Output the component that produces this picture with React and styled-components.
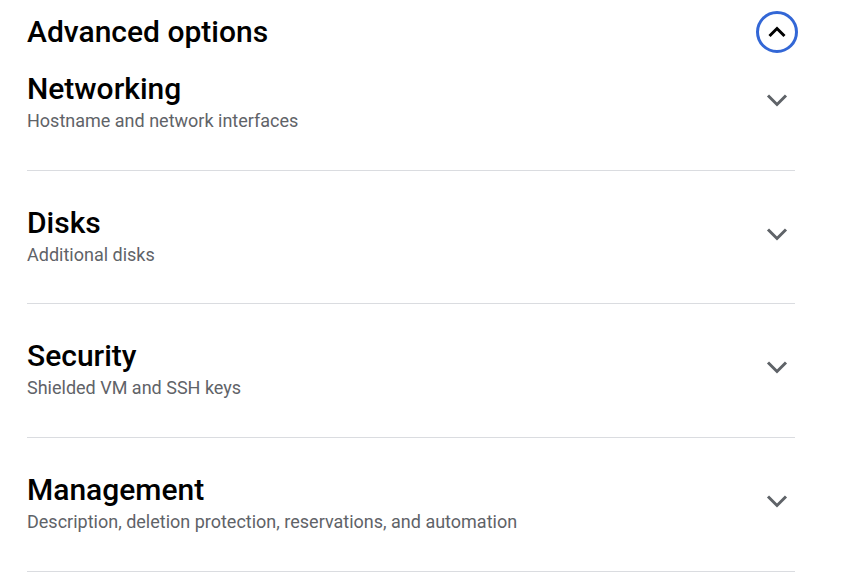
import styled, { createGlobalStyle } from "styled-components";

const sections = [
  { title: "Networking", subtitle: "Hostname and network interfaces" },
  { title: "Disks", subtitle: "Additional disks" },
  { title: "Security", subtitle: "Shielded VM and SSH keys" },
  { title: "Management", subtitle: "Description, deletion protection, reservations, and automation" },
];

function Chevron({ up, color }) {
  return (
    <svg width="24" height="24" viewBox="0 0 24 24">
      <polyline
        points={up ? "4.5,16 12,8.5 19.5,16" : "3,7.5 12,16.5 21,7.5"}
        fill="none"
        stroke={color}
        strokeWidth="3"
      />
    </svg>
  );
}

export default function App() {
  return (
    <>
      <GlobalStyle />
      <Page>
        <Header>
          <HeaderTitle>Advanced options</HeaderTitle>
          <CollapseButton>
            <Chevron up color="#000" />
          </CollapseButton>
        </Header>
        {sections.map((s, i) => (
          <Section key={s.title} first={i === 0}>
            <Infos>
              <h2>{s.title}</h2>
              <p>{s.subtitle}</p>
            </Infos>
            <ExpandButton>
              <Chevron color="#5f6368" />
            </ExpandButton>
          </Section>
        ))}
      </Page>
    </>
  );
}

const GlobalStyle = createGlobalStyle`
  body {
    margin: 0;
    background: #ffffff;
    font-family: Roboto, "Liberation Sans", sans-serif;
  }
`;

const Page = styled.div`
  width: 768px;
  padding-left: 27px;
  display: flex;
  flex-direction: column;
`;

const Header = styled.div`
  height: 64px;
  display: flex;
  align-items: center;
  justify-content: space-between;
`;

const HeaderTitle = styled.h1`
  margin: 0;
  font-size: 30px;
  line-height: 36px;
  font-weight: 500;
  color: #000;
`;

const CollapseButton = styled.button`
  width: 42px;
  height: 42px;
  margin-right: -3px;
  padding: 0;
  border: 3px solid #3367d6;
  border-radius: 50%;
  background: none;
  display: flex;
  align-items: center;
  justify-content: center;
  cursor: pointer;
`;

const Section = styled.div`
  display: flex;
  align-items: flex-start;
  justify-content: space-between;
  padding: ${(p) => (p.first ? "7px" : "34px")} 0 36.7px;
  border-bottom: 1px solid #dadce0;
`;

const Infos = styled.div`
  display: flex;
  flex-direction: column;

  h2{
    margin: 0;
    font-size: 30px;
    line-height: 36px;
    font-weight: 500;
    color: #000;
  }

  p{
    margin: 2px 0 0;
    font-size: 18px;
    line-height: 24px;
    color: #5f6368;
  }
`;

const ExpandButton = styled.button`
  width: 36px;
  height: 36px;
  margin-top: 11px;
  padding: 0;
  border: none;
  background: none;
  display: flex;
  align-items: center;
  justify-content: center;
  cursor: pointer;
`;
